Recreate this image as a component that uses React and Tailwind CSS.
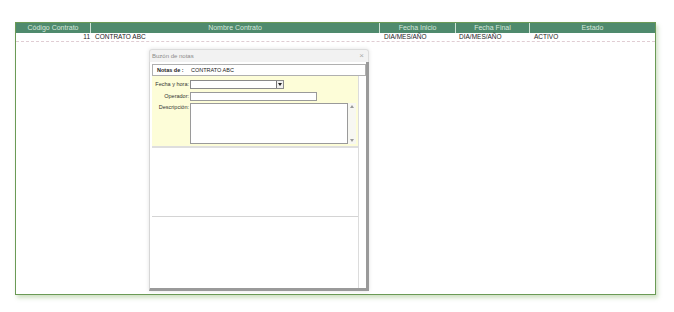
export default function App() {
  const f = { fontFamily: '"Liberation Sans", Arial, sans-serif' };
  return (
    <div className="relative w-[674px] h-[312px] bg-white" style={f}>
      <div className="absolute left-0 top-0 w-full h-full flex">
        <div className="ml-[15px] mt-[22px] w-[641px] h-[273px] border border-[#6b9a56] bg-white shadow-[2px_3px_4px_rgba(120,170,90,0.35)] flex flex-col">
          <div className="flex h-[10px] bg-[#4f8a6d] text-[7px] leading-[10px] text-[#d6e8dc]">
            <div className="w-[75px] text-center border-r border-[#cfe3d6]">Código Contrato</div>
            <div className="w-[289px] text-center border-r border-[#cfe3d6]">Nombre Contrato</div>
            <div className="w-[76px] text-center border-r border-[#cfe3d6]">Fecha Inicio</div>
            <div className="w-[74px] text-center border-r border-[#cfe3d6]">Fecha Final</div>
            <div className="flex-1 text-center">Estado</div>
          </div>
          <div className="flex h-[9px] text-[6.5px] leading-[8px] text-[#222] border-b border-dashed border-[#e0cdd3]">
            <div className="w-[75px] text-right pr-[1px]">11</div>
            <div className="w-[289px] pl-[4px]">CONTRATO ABC</div>
            <div className="w-[76px] pl-[4px]">DIA/MES/AÑO</div>
            <div className="w-[74px] pl-[3px]">DIA/MES/AÑO</div>
            <div className="flex-1 pl-[4px]">ACTIVO</div>
          </div>
        </div>
      </div>

      <div className="absolute left-[149px] top-[49px] w-[220px] h-[242px] flex flex-col shadow-[0_0_4px_rgba(0,0,0,0.12)] rounded-t-[3px]">
        <div className="h-[13px] bg-[#f2f2f2] border border-b-0 border-[#dcdcdc] rounded-t-[3px] flex items-center justify-between px-[2px]">
          <span className="text-[6px] text-[#8a8a8a]">Buzón de notas</span>
          <span className="text-[8px] leading-none text-[#aaa] mr-[2px]">×</span>
        </div>
        <div className="flex-1 bg-white border-l border-[#d6d6d6] border-r-[3px] border-b-[3px] border-r-[#9a9a9a] border-b-[#9a9a9a] flex flex-col pl-[2px] pt-[2px]">
          <div className="h-[12px] w-[214px] border border-[#b0b0b0] flex items-center text-[5.5px] text-[#222]">
            <span className="font-bold pl-[4px] w-[38px]">Notas de :</span>
            <span>CONTRATO ABC</span>
          </div>
          <div className="flex-1 flex">
            <div className="w-[206px] flex flex-col">
              <div className="h-[72px] bg-[#fdfdd8] border-b-2 border-[#dedede] flex flex-col pt-[4px] text-[5.5px] text-[#333]">
                <div className="flex items-center h-[9px]">
                  <span className="w-[38px] text-right pr-[1px]">Fecha y hora:</span>
                  <div className="w-[94px] h-[9px] bg-white border border-[#8a8a8a] flex justify-end">
                    <div className="w-[7px] h-full border-l border-[#777] bg-[#f0f0f0] flex items-center justify-center">
                      <div className="w-0 h-0 border-l-[2px] border-r-[2px] border-t-[3px] border-l-transparent border-r-transparent border-t-[#222]" />
                    </div>
                  </div>
                </div>
                <div className="flex items-center h-[9px] mt-[3px]">
                  <span className="w-[38px] text-right pr-[1px]">Operador:</span>
                  <div className="w-[127px] h-[9px] bg-white border border-[#9a9a9a]" />
                </div>
                <div className="flex mt-[2px]">
                  <span className="w-[38px] text-right pr-[1px] leading-[8px]">Descripción:</span>
                  <div className="w-[158px] h-[41px] bg-white border border-[#9a9a9a]" />
                  <div className="w-[8px] h-[41px] flex flex-col items-center justify-between py-[2px] bg-[#f7f7f2]">
                    <div className="w-0 h-0 border-l-[2px] border-r-[2px] border-b-[3px] border-l-transparent border-r-transparent border-b-[#999]" />
                    <div className="w-0 h-0 border-l-[2px] border-r-[2px] border-t-[3px] border-l-transparent border-r-transparent border-t-[#999]" />
                  </div>
                </div>
              </div>
              <div className="h-[69px] border-b border-[#d4d4d4]" />
              <div className="flex-1" />
            </div>
            <div className="w-[8px] border-l border-[#dcdcdc] bg-white" />
          </div>
        </div>
      </div>
    </div>
  );
}
